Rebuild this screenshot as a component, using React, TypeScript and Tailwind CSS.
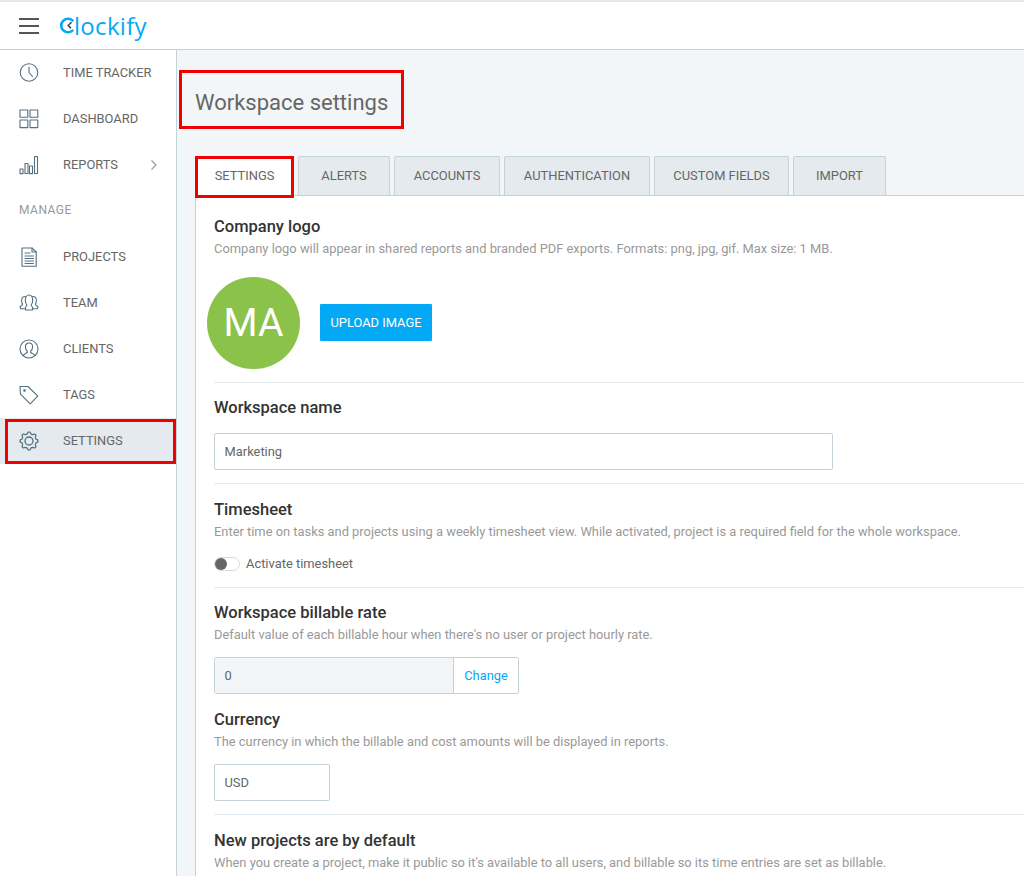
import React from "react";

const ic = "#55707f";

function Icon({ children, w = 20 }: { children: React.ReactNode; w?: number }) {
  return (
    <svg width={w} height={20} viewBox="0 0 20 20" fill="none" stroke={ic} strokeWidth={1.1} strokeLinejoin="round" strokeLinecap="round">
      {children}
    </svg>
  );
}

const gearPoints = Array.from({ length: 32 }, (_, i) => {
  const a = ((i - 0.5) / 32) * Math.PI * 2;
  const r = i % 4 < 2 ? 9 : 7.2;
  return `${(10 + r * Math.cos(a)).toFixed(2)},${(10 + r * Math.sin(a)).toFixed(2)}`;
}).join(" ");

const icons: Record<string, React.ReactNode> = {
  clock: (
    <>
      <circle cx="10" cy="9.500" r="8.800" />
      <path d="M10 4v5.500l3.500 4" />
    </>
  ),
  dash: (
    <>
      <rect x="1" y="1" width="7.800" height="7.200" />
      <rect x="11" y="1" width="7.800" height="7.200" />
      <rect x="1" y="11" width="7.800" height="7.600" />
      <rect x="11" y="11" width="7.800" height="7.600" />
    </>
  ),
  reports: (
    <>
      <rect x="1" y="14" width="3" height="4.600" />
      <rect x="6" y="8.500" width="3" height="10" />
      <rect x="10.500" y="11" width="3" height="7.600" />
      <rect x="15.500" y="1.500" width="3" height="17" />
    </>
  ),
  projects: (
    <>
      <path d="M3 1h10l4.200 4v14.200H3z" />
      <path d="M13 1v4h4.200M6 6h5M6 9h8.500M6 11.500h8.500M6 14h8.500M6 16.500h8.500" />
    </>
  ),
  team: (
    <g transform="translate(0 -1.500)">
      <path d="M6.500 18.500v-2.700c0-.8 1.500-1.100 1.500-2.200-.9-.8-1.700-2.200-1.700-4.600C6.300 6 7.600 3.500 10 3.500s3.700 2.500 3.700 5.500c0 2.400-.8 3.800-1.700 4.600 0 1.100 1.500 1.400 1.500 2.200v2.700z" />
      <path d="M6.400 5C3.900 4.800 2.600 6.500 2.600 9c0 1.500.4 2.800 1 3.500.2 1.100-1.300 1.800-2.600 2.700l.4 2h5.100" />
      <path d="M13.600 5c2.500-.2 3.800 1.500 3.800 4 0 1.500-.4 2.800-1 3.500-.2 1.100 1.300 1.800 2.600 2.700l-.4 2h-5.100" />
    </g>
  ),
  clients: (
    <>
      <circle cx="10" cy="10" r="9" />
      <path d="M4 16.500c.6-1.800 3.200-2 4.300-3v-1.400C6.900 11 6.400 9.500 6.400 7.700c0-2.300 1.500-3.700 3.600-3.700s3.600 1.400 3.600 3.700c0 1.800-.5 3.300-1.900 4.400v1.400c1.100 1 3.700 1.200 4.300 3" />
    </>
  ),
  tags: (
    <>
      <path d="M1 1.500h8l9.800 9.700-7.600 7.600L1.500 9.200z" />
      <circle cx="5.500" cy="5.500" r="0.800" fill={ic} />
    </>
  ),
  settings: (
    <>
      <polygon points={gearPoints} strokeWidth={1.200} />
      <circle cx="10" cy="10" r="4" strokeWidth={1.300} />
    </>
  ),
};

function NavItem({ icon, label, chevron, active }: { icon: string; label: string; chevron?: boolean; active?: boolean }) {
  return (
    <div className={`h-[46px] flex items-center pl-[19px] ${active ? "bg-[#e4eaee]" : ""}`}>
      <Icon>{icons[icon]}</Icon>
      <span className="ml-[24px] text-[12.9px] text-[#666666] flex-1">{label}</span>
      {chevron && (
        <svg width="8" height="12" viewBox="0 0 8 12" fill="none" stroke="#8a9aa5" strokeWidth="1.100" className="mr-[18px]">
          <path d="M1.500 1.500 6 6l-4.500 4.500" />
        </svg>
      )}
    </div>
  );
}

function Tab({ label, w, active }: { label: string; w: string; active?: boolean }) {
  return (
    <div
      className={`${w} h-[39px] flex items-center justify-center text-[12.9px] text-[#666666] border border-[#c6d2d9] rounded-t-[2px] ${
        active ? "bg-white border-b-white -mb-px h-[40px]" : "bg-[#e4eaee] border-b-0"
      }`}
    >
      {label}
    </div>
  );
}

function Heading({ children }: { children: React.ReactNode }) {
  return <div className="text-[16.5px] leading-[20px] font-medium text-[#333333]">{children}</div>;
}

function Desc({ children }: { children: React.ReactNode }) {
  return <div className="text-[12.88px] leading-[16px] text-[#999999] mt-[4px] whitespace-nowrap">{children}</div>;
}

export default function App() {
  return (
    <div className="w-[1024px] h-[876px] overflow-hidden flex flex-col bg-white relative font-['Roboto',sans-serif] border-t-2 border-[#e4e8eb]">
      <header className="h-[48px] shrink-0 border-b border-[#c6d2d9] flex items-center pl-[19px]">
        <div className="flex flex-col gap-[5px] w-[20px]">
          <div className="h-[2px] bg-[#555555]" />
          <div className="h-[2px] bg-[#555555]" />
          <div className="h-[2px] bg-[#555555]" />
        </div>
        <div className="ml-[20px] flex items-center text-[#03a9f4]">
          <svg width="16" height="17" viewBox="0 0 16 17" fill="none" stroke="#03a9f4" strokeWidth="2.600" strokeLinecap="round" className="mt-[-1px]">
            <path d="M13.500 3.400A6.800 6.800 0 1 0 13.500 13.600" />
            <path d="M12 5.800 9.200 8.500l2.800 2.700" stroke="#1f3340" strokeWidth="1.500" strokeDasharray="1.400 1.400" />
          </svg>
          <span className="text-[24px] leading-[28px] font-['Open_Sans',sans-serif] tracking-[0.3px] -ml-[1px]">lockify</span>
        </div>
      </header>
      <div className="flex flex-1 min-h-0">
        <aside className="w-[177px] shrink-0 border-r border-[#c6d2d9] pt-0">
          <NavItem icon="clock" label="TIME TRACKER" />
          <NavItem icon="dash" label="DASHBOARD" />
          <NavItem icon="reports" label="REPORTS" chevron />
          <div className="h-[46px] flex items-center pl-[19px] pb-[2px] text-[12px] tracking-[0.5px] text-[#999999]">MANAGE</div>
          <NavItem icon="projects" label="PROJECTS" />
          <NavItem icon="team" label="TEAM" />
          <NavItem icon="clients" label="CLIENTS" />
          <NavItem icon="tags" label="TAGS" />
          <NavItem icon="settings" label="SETTINGS" active />
        </aside>
        <main className="flex-1 min-w-0 bg-[#f2f6f8] pl-[18px]">
          <h1 className="h-[106px] flex items-center pb-[2px] text-[22px] text-[#666666] font-normal">Workspace settings</h1>
          <div className="flex gap-[4px] border-b border-[#c6d2d9]">
            <Tab label="SETTINGS" w="w-[99px]" active />
            <Tab label="ALERTS" w="w-[92px]" />
            <Tab label="ACCOUNTS" w="w-[106px]" />
            <Tab label="AUTHENTICATION" w="w-[146px]" />
            <Tab label="CUSTOM FIELDS" w="w-[135px]" />
            <Tab label="IMPORT" w="w-[93px]" />
          </div>
          <section className="bg-white border-l border-[#c6d2d9] pl-[18px] pt-[21px] h-[700px]">
            <Heading>Company logo</Heading>
            <Desc>Company logo will appear in shared reports and branded PDF exports. Formats: png, jpg, gif. Max size: 1 MB.</Desc>
            <div className="flex items-center mt-[20px] -ml-[7px]">
              <div className="w-[93px] h-[92px] rounded-full bg-[#8bc34a] text-white text-[39px] flex items-center justify-center">MA</div>
              <div className="ml-[20px] -mt-[1px] w-[112px] h-[37px] bg-[#03a9f4] text-white text-[12.9px] flex items-center justify-center rounded-[1px]">UPLOAD IMAGE</div>
            </div>
            <div className="border-t border-[#e4eaee] mt-[13px]" />
            <div className="mt-[15px]"><Heading>Workspace name</Heading></div>
            <div className="mt-[15px] w-[619px] h-[37px] border border-[#c6d2d9] rounded-[2px] flex items-center pl-[9.500px] text-[12.9px] text-[#666666]">Marketing</div>
            <div className="border-t border-[#e4eaee] mt-[13px]" />
            <div className="mt-[16px]"><Heading>Timesheet</Heading></div>
            <Desc>Enter time on tasks and projects using a weekly timesheet view. While activated, project is a required field for the whole workspace.</Desc>
            <div className="flex items-center mt-[16px] h-[16px]">
              <div className="w-[26px] h-[14px] rounded-full border border-[#d5dde2] bg-white relative">
                <div className="absolute left-0 top-0 w-[12px] h-[12px] rounded-full bg-[#666666]" />
              </div>
              <span className="ml-[6px] text-[12.9px] text-[#666666]">Activate timesheet</span>
            </div>
            <div className="border-t border-[#e4eaee] mt-[15px]" />
            <div className="mt-[15px]"><Heading>Workspace billable rate</Heading></div>
            <Desc>Default value of each billable hour when there's no user or project hourly rate.</Desc>
            <div className="mt-[14px] w-[305px] h-[37px] border border-[#c6d2d9] rounded-[2px] flex text-[12.9px]">
              <div className="w-[239px] bg-[#f2f6f8] border-r border-[#c6d2d9] flex items-center pl-[9.500px] text-[#666666]">0</div>
              <div className="flex-1 flex items-center justify-center text-[#03a9f4]">Change</div>
            </div>
            <div className="mt-[16px]"><Heading>Currency</Heading></div>
            <Desc>The currency in which the billable and cost amounts will be displayed in reports.</Desc>
            <div className="mt-[14px] w-[116px] h-[37px] border border-[#c6d2d9] rounded-[2px] flex items-center pl-[9.500px] text-[12.9px] text-[#666666]">USD</div>
            <div className="border-t border-[#e4eaee] mt-[13px]" />
            <div className="mt-[16px]"><Heading>New projects are by default</Heading></div>
            <Desc>When you create a project, make it public so it's available to all users, and billable so its time entries are set as billable.</Desc>
          </section>
        </main>
      </div>
      <div className="absolute left-[179px] top-[68px] w-[225px] h-[59px] border-[3px] border-[#f00000]" />
      <div className="absolute left-[195px] top-[154px] w-[99px] h-[42px] border-[3px] border-[#f00000]" />
      <div className="absolute left-[5px] top-[417px] w-[171px] h-[45px] border-[3px] border-[#f00000]" />
    </div>
  );
}
